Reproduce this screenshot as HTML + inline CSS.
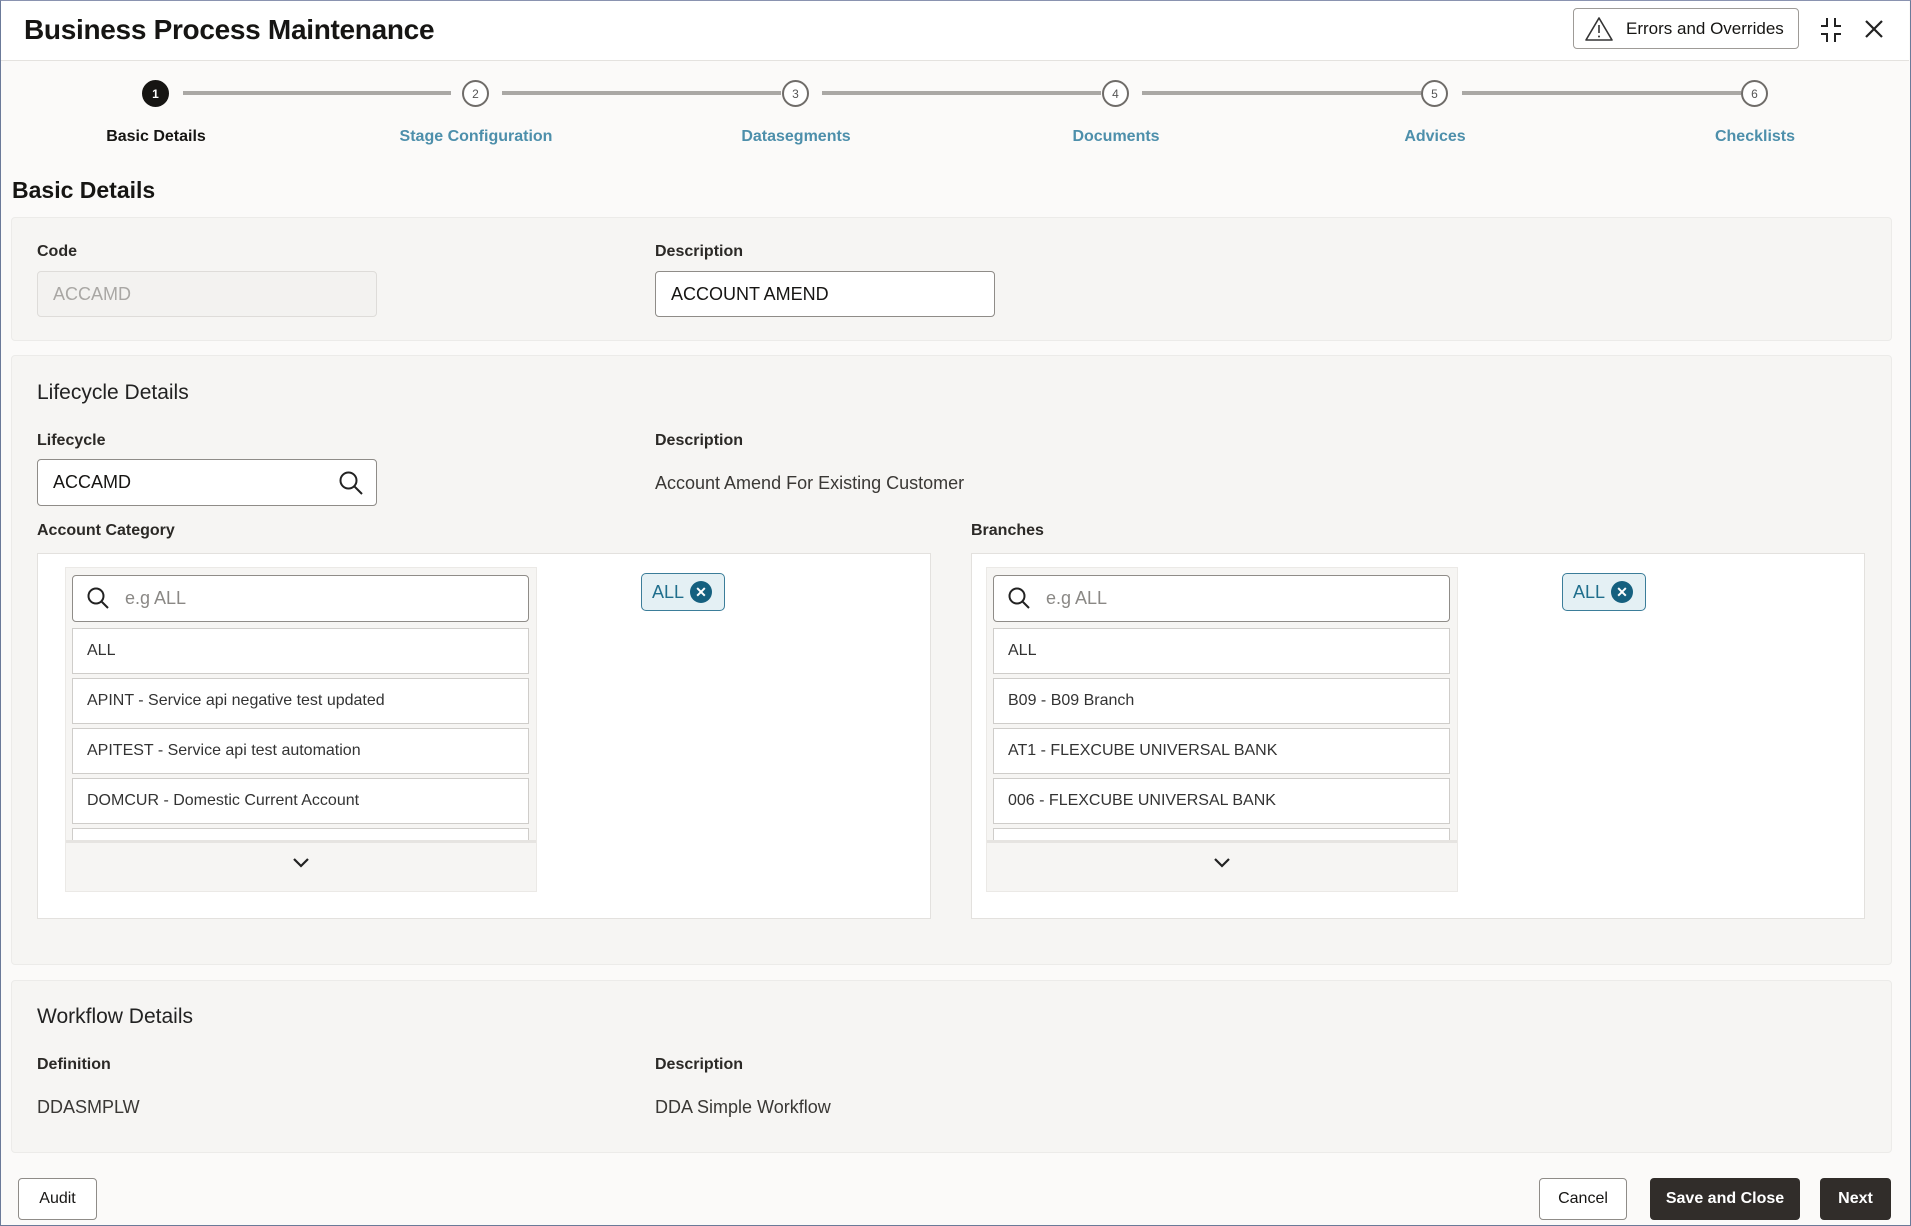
<!DOCTYPE html>
<html><head><meta charset="utf-8"><style>
*{box-sizing:border-box;margin:0;padding:0}
body{width:1911px;height:1226px;overflow:hidden;font-family:"Liberation Sans",sans-serif;color:#161513;background:#fbfaf9;position:relative}
.frame{position:absolute;left:0;top:0;width:1911px;height:1226px;border:1px solid #6b7a99;border-top:1px solid #8a93b0}
.hdr{position:absolute;left:1px;top:1px;width:1908px;height:60px;background:#fff;border-bottom:1px solid #e4e2df}
.abs{position:absolute}
.title{left:24px;top:14px;font-size:28px;font-weight:bold;letter-spacing:-0.3px}
.err{left:1573px;top:8px;width:226px;height:41px;border:1px solid #9e9b97;border-radius:4px;background:#fff;font-size:17px;display:flex;align-items:center;padding-left:52px}
.circ{width:27px;height:27px;border-radius:50%;border:2px solid #6f6c69;background:#fff;font-size:12px;color:#555;display:flex;align-items:center;justify-content:center;top:80px}
.line{height:4px;background:#aaa8a5;top:91px}
.slab{top:128px;font-size:16px;font-weight:bold;color:#4d8fab;text-align:center;width:240px}
.panel{background:#f6f5f3;border:1px solid #ecebe9;border-radius:4px}
.lbl{font-size:16px;font-weight:bold;color:#2b2926}
.inp{border:1px solid #8f8c88;border-radius:4px;background:#fff;font-size:18px;padding-left:15px;display:flex;align-items:center}
.val{font-size:18px;color:#3a3835}
.h2{font-size:21px;color:#222}
.box{background:#fff;border:1px solid #e3e1de}
.list{background:#f6f5f3;border:1px solid #ebe9e6}
.item{background:#fff;border:1px solid #cfcdca;font-size:16px;color:#333;display:flex;align-items:center;padding-left:14px;height:46px}
.chip{height:38px;border:1px solid #3b7d99;border-radius:5px;background:#e4f0f4;color:#1f6e8c;font-size:18px;display:flex;align-items:center;padding-left:10px;gap:6px}
.x{width:22px;height:22px;border-radius:50%;background:#15607f;color:#fff;font-size:14px;font-weight:bold;display:flex;align-items:center;justify-content:center}
.btn{top:1178px;height:42px;border-radius:4px;font-size:16px;display:flex;align-items:center;justify-content:center}
.b1{border:1px solid #8f8c88;background:#fff}
.b2{background:#312d2a;color:#fff;font-weight:bold}
</style></head><body>
<div class="hdr"></div>
<div class="abs title">Business Process Maintenance</div>
<div class="abs err"><svg class="abs" style="left:10px;top:7px" width="30" height="26" viewBox="0 0 30 26"><path d="M15 2 L28 24 H2 Z" fill="none" stroke="#333" stroke-width="1.6" stroke-linejoin="round"/><path d="M15 9 V17" stroke="#333" stroke-width="1.6"/><circle cx="15" cy="20.5" r="1" fill="#333"/></svg>Errors and Overrides</div>
<svg class="abs" style="left:1817px;top:16px" width="28" height="28" viewBox="0 0 28 28" fill="none" stroke="#222" stroke-width="2"><path d="M10 2 V10 H4 M18 2 V10 H24 M4 18 H10 V26 M24 18 H18 V26"/></svg>
<svg class="abs" style="left:1864px;top:19px" width="20" height="20" viewBox="0 0 20 20" stroke="#222" stroke-width="2.2"><path d="M2 2 L18 18 M18 2 L2 18"/></svg>

<div class="abs line" style="left:183px;width:268px"></div>
<div class="abs line" style="left:502px;width:279px"></div>
<div class="abs line" style="left:822px;width:279px"></div>
<div class="abs line" style="left:1142px;width:279px"></div>
<div class="abs line" style="left:1462px;width:279px"></div>
<div class="abs circ" style="left:142px;background:#161513;border-color:#161513;color:#fff;font-weight:bold">1</div>
<div class="abs circ" style="left:462px">2</div>
<div class="abs circ" style="left:782px">3</div>
<div class="abs circ" style="left:1102px">4</div>
<div class="abs circ" style="left:1421px">5</div>
<div class="abs circ" style="left:1741px">6</div>
<div class="abs slab" style="left:36px;color:#161513">Basic Details</div>
<div class="abs slab" style="left:356px">Stage Configuration</div>
<div class="abs slab" style="left:676px">Datasegments</div>
<div class="abs slab" style="left:996px">Documents</div>
<div class="abs slab" style="left:1315px">Advices</div>
<div class="abs slab" style="left:1635px">Checklists</div>

<div class="abs" style="left:12px;top:177px;font-size:23px;font-weight:bold">Basic Details</div>

<div class="abs panel" style="left:11px;top:217px;width:1881px;height:124px"></div>
<div class="abs lbl" style="left:37px;top:243px">Code</div>
<div class="abs inp" style="left:37px;top:271px;width:340px;height:46px;background:#f3f2f0;border-color:#dedcd9;color:#a9a7a4">ACCAMD</div>
<div class="abs lbl" style="left:655px;top:243px">Description</div>
<div class="abs inp" style="left:655px;top:271px;width:340px;height:46px">ACCOUNT AMEND</div>

<div class="abs panel" style="left:11px;top:355px;width:1881px;height:610px"></div>
<div class="abs h2" style="left:37px;top:381px">Lifecycle Details</div>
<div class="abs lbl" style="left:37px;top:432px">Lifecycle</div>
<div class="abs inp" style="left:37px;top:459px;width:340px;height:47px">ACCAMD</div>
<svg class="abs" style="left:338px;top:470px" width="26" height="26" viewBox="0 0 26 26" fill="none" stroke="#222" stroke-width="2"><circle cx="10.5" cy="10.5" r="8"/><path d="M16.5 16.5 L24 24"/></svg>
<div class="abs lbl" style="left:655px;top:432px">Description</div>
<div class="abs val" style="left:655px;top:473px">Account Amend For Existing Customer</div>
<div class="abs lbl" style="left:37px;top:522px">Account Category</div>
<div class="abs lbl" style="left:971px;top:522px">Branches</div>

<div class="abs box" style="left:37px;top:553px;width:894px;height:366px"></div>
<div class="abs list" style="left:65px;top:567px;width:472px;height:325px"></div>
<div class="abs inp" style="left:72px;top:575px;width:457px;height:47px;padding-left:52px;color:#8a8885">e.g ALL</div>
<svg class="abs" style="left:86px;top:586px" width="24" height="24" viewBox="0 0 24 24" fill="none" stroke="#222" stroke-width="2"><circle cx="10" cy="10" r="7.5"/><path d="M15.5 15.5 L22 22"/></svg>
<div class="abs item" style="left:72px;top:628px;width:457px">ALL</div>
<div class="abs item" style="left:72px;top:678px;width:457px">APINT - Service api negative test updated</div>
<div class="abs item" style="left:72px;top:728px;width:457px">APITEST - Service api test automation</div>
<div class="abs item" style="left:72px;top:778px;width:457px">DOMCUR - Domestic Current Account</div>
<div class="abs item" style="left:72px;top:828px;width:457px;height:12px;border-bottom:none"></div>
<div class="abs" style="left:66px;top:840px;width:470px;height:3px;background:#e6e4e1"></div>
<svg class="abs" style="left:292px;top:857px" width="18" height="12" viewBox="0 0 18 12" fill="none" stroke="#222" stroke-width="2.2"><path d="M2 2 L9 9 L16 2"/></svg>
<div class="abs chip" style="left:641px;top:573px;width:84px">ALL<span class="x">✕</span></div>

<div class="abs box" style="left:971px;top:553px;width:894px;height:366px"></div>
<div class="abs list" style="left:986px;top:567px;width:472px;height:325px"></div>
<div class="abs inp" style="left:993px;top:575px;width:457px;height:47px;padding-left:52px;color:#8a8885">e.g ALL</div>
<svg class="abs" style="left:1007px;top:586px" width="24" height="24" viewBox="0 0 24 24" fill="none" stroke="#222" stroke-width="2"><circle cx="10" cy="10" r="7.5"/><path d="M15.5 15.5 L22 22"/></svg>
<div class="abs item" style="left:993px;top:628px;width:457px">ALL</div>
<div class="abs item" style="left:993px;top:678px;width:457px">B09 - B09 Branch</div>
<div class="abs item" style="left:993px;top:728px;width:457px">AT1 - FLEXCUBE UNIVERSAL BANK</div>
<div class="abs item" style="left:993px;top:778px;width:457px">006 - FLEXCUBE UNIVERSAL BANK</div>
<div class="abs item" style="left:993px;top:828px;width:457px;height:12px;border-bottom:none"></div>
<div class="abs" style="left:987px;top:840px;width:470px;height:3px;background:#e6e4e1"></div>
<svg class="abs" style="left:1213px;top:857px" width="18" height="12" viewBox="0 0 18 12" fill="none" stroke="#222" stroke-width="2.2"><path d="M2 2 L9 9 L16 2"/></svg>
<div class="abs chip" style="left:1562px;top:573px;width:84px">ALL<span class="x">✕</span></div>

<div class="abs panel" style="left:11px;top:980px;width:1881px;height:173px"></div>
<div class="abs h2" style="left:37px;top:1005px">Workflow Details</div>
<div class="abs lbl" style="left:37px;top:1056px">Definition</div>
<div class="abs val" style="left:37px;top:1097px">DDASMPLW</div>
<div class="abs lbl" style="left:655px;top:1056px">Description</div>
<div class="abs val" style="left:655px;top:1097px">DDA Simple Workflow</div>

<div class="abs btn b1" style="left:18px;width:79px">Audit</div>
<div class="abs btn b1" style="left:1539px;width:88px">Cancel</div>
<div class="abs btn b2" style="left:1650px;width:150px">Save and Close</div>
<div class="abs btn b2" style="left:1820px;width:71px">Next</div>
<div class="frame"></div>
</body></html>
